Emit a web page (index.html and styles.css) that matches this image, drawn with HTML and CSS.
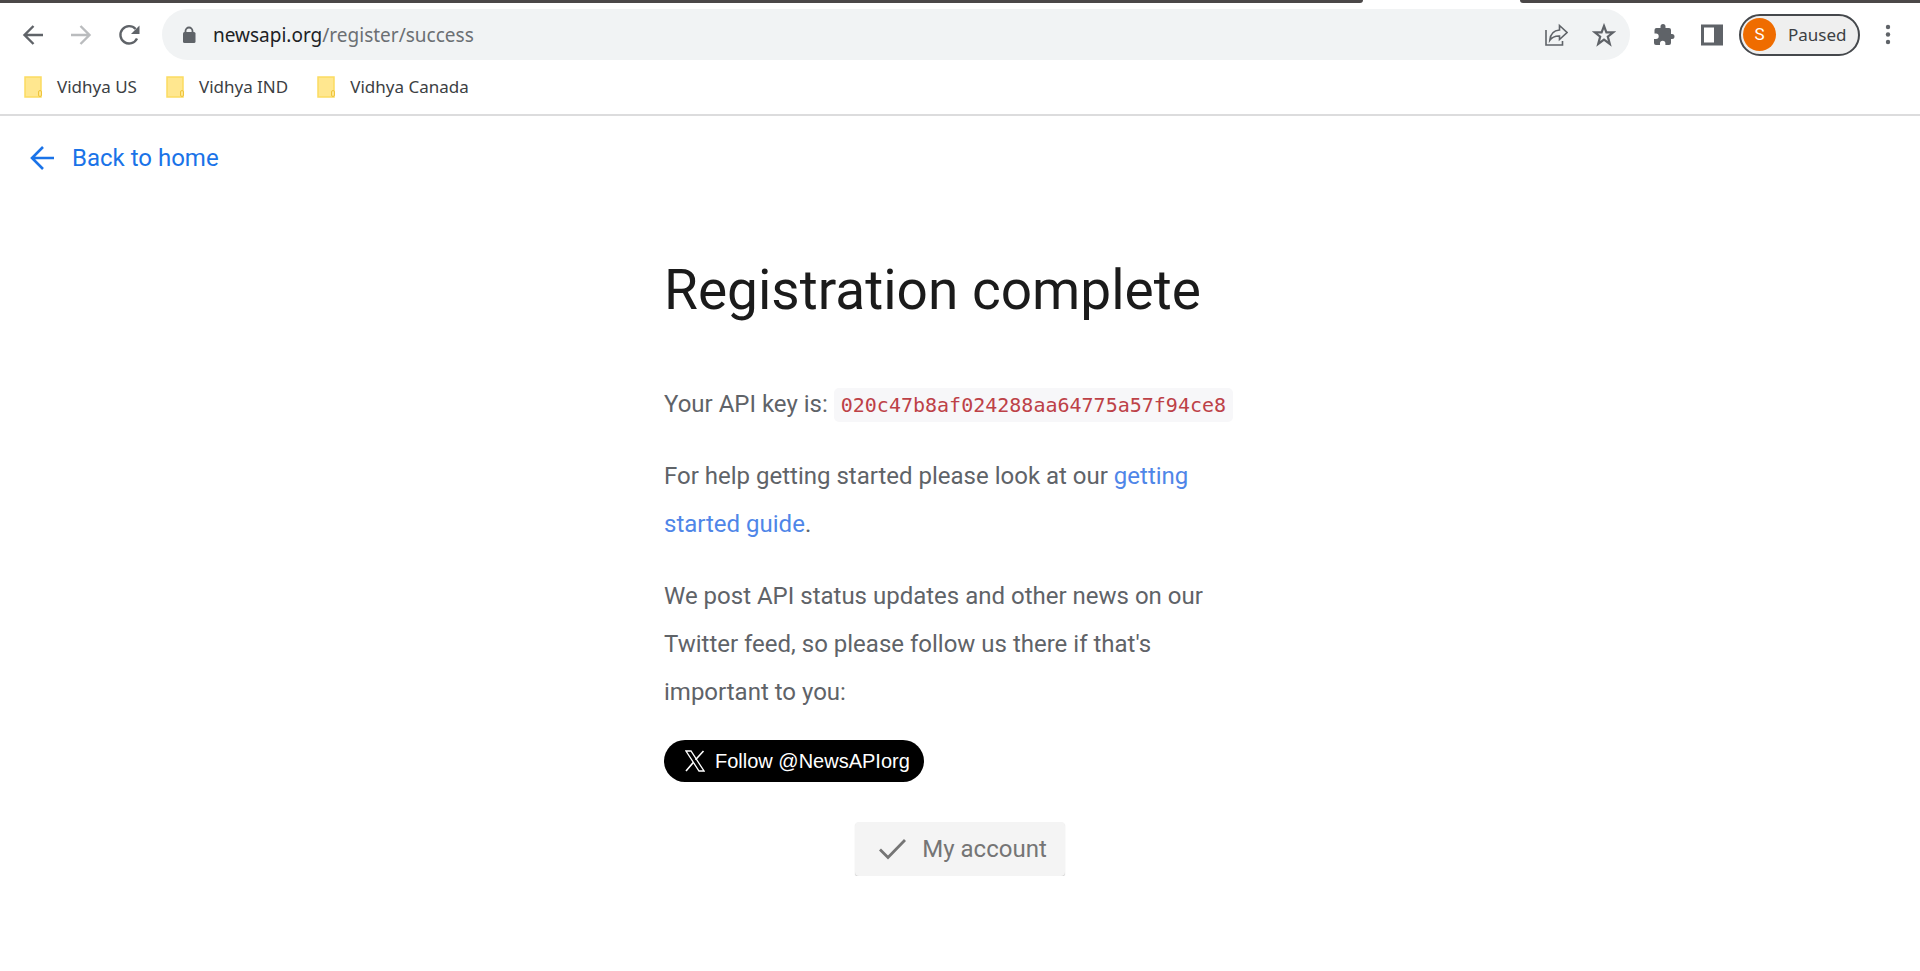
FILE: index.html
```html
<!DOCTYPE html>
<html lang="en">
<head>
<meta charset="utf-8">
<title>Registration complete</title>
<link rel="stylesheet" href="styles.css">
</head>
<body>
<header class="browser">
  <div class="tabstrip"><span class="strip-left"></span><span class="strip-right"></span></div>
  <div class="toolbar">
    <div class="nav">
      <button class="icon-btn" aria-label="Back"><svg width="24" height="24" viewBox="0 0 24 24" fill="none" stroke="#5f6368" stroke-width="2.400"><path d="M22 12H4M12.500 3L3.500 12l9 9"/></svg></button>
      <button class="icon-btn" aria-label="Forward"><svg width="24" height="24" viewBox="0 0 24 24" fill="none" stroke="#babcbe" stroke-width="2.400"><path d="M2 12h18M11.500 3l9 9-9 9"/></svg></button>
      <button class="icon-btn" aria-label="Reload"><svg width="24" height="24" viewBox="0 0 24 24"><path fill="none" stroke="#5f6368" stroke-width="2.400" d="M20 15.500A8.700 8.700 0 1 1 18.600 6"/><path fill="#5f6368" d="M22.500 2.500v8.500H14z"/></svg></button>
    </div>
    <div class="omnibox">
      <svg width="14" height="18" viewBox="0 0 14 18"><path fill="none" stroke="#5f6368" stroke-width="1.800" d="M3.500 8V5a3.500 3.500 0 0 1 7 0v3"/><rect x="1" y="6" width="12.500" height="11" rx="1.500" fill="#5f6368"/></svg>
      <a class="url" href="#">newsapi.org<span class="path">/register/success</span></a>
      <button class="icon-btn" aria-label="Share"><svg width="24" height="24" viewBox="0 0 24 24" fill="none" stroke="#5f6368" stroke-width="1.600"><path d="M2 7v15h16.500v-4"/><path d="M15.500 2.500l7.500 7-7.500 7V13c-4.500-.2-7.500 1.200-9.700 4.300C6.300 11.500 9.500 7.400 15.500 7z"/></svg></button>
      <button class="icon-btn" aria-label="Bookmark"><svg width="24" height="24" viewBox="0 0 24 24" fill="none" stroke="#5f6368" stroke-width="2.200"><path d="M12 3l2.400 6.300h6.900l-5.500 4.300 2 7.400-5.800-4.300-5.800 4.300 2-7.400-5.500-4.300h6.900z"/></svg></button>
    </div>
    <div class="actions">
      <button class="icon-btn" aria-label="Extensions"><svg width="24" height="24" viewBox="0 0 24 24" fill="#5f6368"><path d="M20 11h-1V7a2 2 0 0 0-2-2h-3.500V3.500a2.500 2.500 0 0 0-5 0V5H4.500a2 2 0 0 0-2 2v3.500H4a2.600 2.600 0 0 1 0 5.400H2V20a2 2 0 0 0 2 2h4v-1.500a2.700 2.700 0 0 1 5.400 0V22H17a2 2 0 0 0 2-2v-4h1a2.500 2.500 0 0 0 0-5z"/></svg></button>
      <button class="icon-btn" aria-label="Side panel"><svg width="24" height="24" viewBox="0 0 24 24"><path fill="#5f6368" fill-rule="evenodd" d="M1 1.500h22v21H1zM4 4.500v15h10v-15z"/></svg></button>
      <button class="profile"><span class="avatar">S</span><span>Paused</span></button>
      <button class="icon-btn menu" aria-label="Menu"><svg width="8" height="24" viewBox="0 0 8 24" fill="#5f6368"><circle cx="4" cy="4" r="2.200"/><circle cx="4" cy="11.500" r="2.200"/><circle cx="4" cy="19" r="2.200"/></svg></button>
    </div>
  </div>
  <nav class="bookmarks">
    <a href="#"><svg width="20" height="22" viewBox="0 0 20 22"><path fill="#ffe78f" stroke="#fbdc62" stroke-width="1.500" d="M1 1h16v20H1z"/><rect x="14.500" y="14.500" width="3" height="6" rx="1.500" fill="#ffe78f" stroke="#efc43c"/></svg>Vidhya US</a>
    <a href="#"><svg width="20" height="22" viewBox="0 0 20 22"><path fill="#ffe78f" stroke="#fbdc62" stroke-width="1.500" d="M1 1h16v20H1z"/><rect x="14.500" y="14.500" width="3" height="6" rx="1.500" fill="#ffe78f" stroke="#efc43c"/></svg>Vidhya IND</a>
    <a href="#"><svg width="20" height="22" viewBox="0 0 20 22"><path fill="#ffe78f" stroke="#fbdc62" stroke-width="1.500" d="M1 1h16v20H1z"/><rect x="14.500" y="14.500" width="3" height="6" rx="1.500" fill="#ffe78f" stroke="#efc43c"/></svg>Vidhya Canada</a>
  </nav>
</header>
<a class="back" href="#"><svg width="24" height="24" viewBox="0 0 24 24" fill="none" stroke="#1a73e8" stroke-width="2.600"><path d="M24 12H2M13 1L2 12l11 11"/></svg>Back to home</a>
<main class="content">
  <h1>Registration complete</h1>
  <p>Your API key is: <code>020c47b8af024288aa64775a57f94ce8</code></p>
  <p>For help getting started please look at our <a href="#">getting started guide</a>.</p>
  <p>We post API status updates and other news on our Twitter feed, so please follow us there if that's important to you:</p>
  <button class="follow"><svg width="20" height="22" viewBox="0 0 20 22" fill="none" stroke="#fff"><path stroke-width="1.300" d="M1 1h5l13 20h-5z"/><path stroke-width="1.600" d="M18.500 1l-8 8.800M8.500 12.200L1 21"/></svg>Follow @NewsAPIorg</button>
  <button class="account"><svg width="28" height="22" viewBox="0 0 28 22" fill="none" stroke="#757575" stroke-width="2.800"><path d="M2 11.500l8 8L27 2"/></svg>My account</button>
</main>
</body>
</html>
```
FILE: styles.css
```css
* { box-sizing: border-box; }
body { margin: 0; background: #fff; color: #5f6368; font-family: Roboto, sans-serif; }
button { border: 0; padding: 0; background: none; font: inherit; color: inherit; }
a { text-decoration: none; }
svg { display: block; flex: none; }

.browser { border-bottom: 2px solid #dcdcdd; font-family: "Noto Sans", sans-serif; }
.tabstrip { display: flex; justify-content: space-between; height: 3px; }
.strip-left { width: 71%; background: #4b4848; border-bottom-right-radius: 4px; }
.strip-right { width: 400px; background: #4b4848; border-bottom-left-radius: 4px; }
.toolbar { display: flex; align-items: center; padding: 6px 28px 6px 21px; }
.nav { display: flex; gap: 24px; width: 141px; }
.omnibox { flex: 1; display: flex; align-items: center; gap: 24px; height: 51px; padding: 0 14px 0 20px; border-radius: 26px; background: #f1f3f4; }
.url { flex: 1; margin-left: -7px; font-size: 19px; color: #202124; }
.path { color: #6b6f73; }
.actions { display: flex; align-items: center; gap: 24px; padding-left: 22px; }
.profile { display: flex; align-items: center; gap: 12px; height: 42px; width: 121px; margin-left: -9px; padding-left: 2px; border: 2px solid #45484c; border-radius: 21px; background: #efefef; color: #3c4043; font-size: 17px; }
.avatar { width: 33px; height: 33px; border-radius: 50%; background: #ef6c00; color: #fff; font-family: Roboto, sans-serif; line-height: 33px; text-align: center; }
.bookmarks { display: flex; gap: 29px; padding: 6px 24px 13px; font-size: 17px; line-height: 29px; }
.bookmarks a { display: flex; align-items: center; gap: 13px; color: #3c4043; }

.back { display: flex; align-items: center; gap: 18px; padding: 18px 30px; font-size: 24px; line-height: 48px; color: #1a73e8; }
.content { width: 592px; max-width: 100%; margin: 54px auto 0; font-size: 24px; line-height: 48px; }
.content h1 { margin: 0 0 54px; font-size: 55px; font-weight: 400; line-height: 72px; color: #1b1b1b; }
.content p { margin: 0 0 24px; }
.content p a { color: #4f86e8; }
.content code { padding: 5px 7px; border-radius: 5px; background: #f7f7f9; color: #bd4147; font-family: "DejaVu Sans Mono", monospace; font-size: 20px; line-height: 24px; }
.follow { display: flex; align-items: center; gap: 10px; height: 42px; padding: 0 14px 0 21px; border-radius: 21px; background: #000; color: #fff; font-family: "Liberation Sans", sans-serif; font-size: 20px; }
.account { display: flex; align-items: center; gap: 16px; height: 54px; margin: 40px auto 0; padding: 0 18px 0 23px; border-radius: 4px; background: #f4f4f4; box-shadow: 0 1px 1px #c8c8c8; color: #757575; }
```
